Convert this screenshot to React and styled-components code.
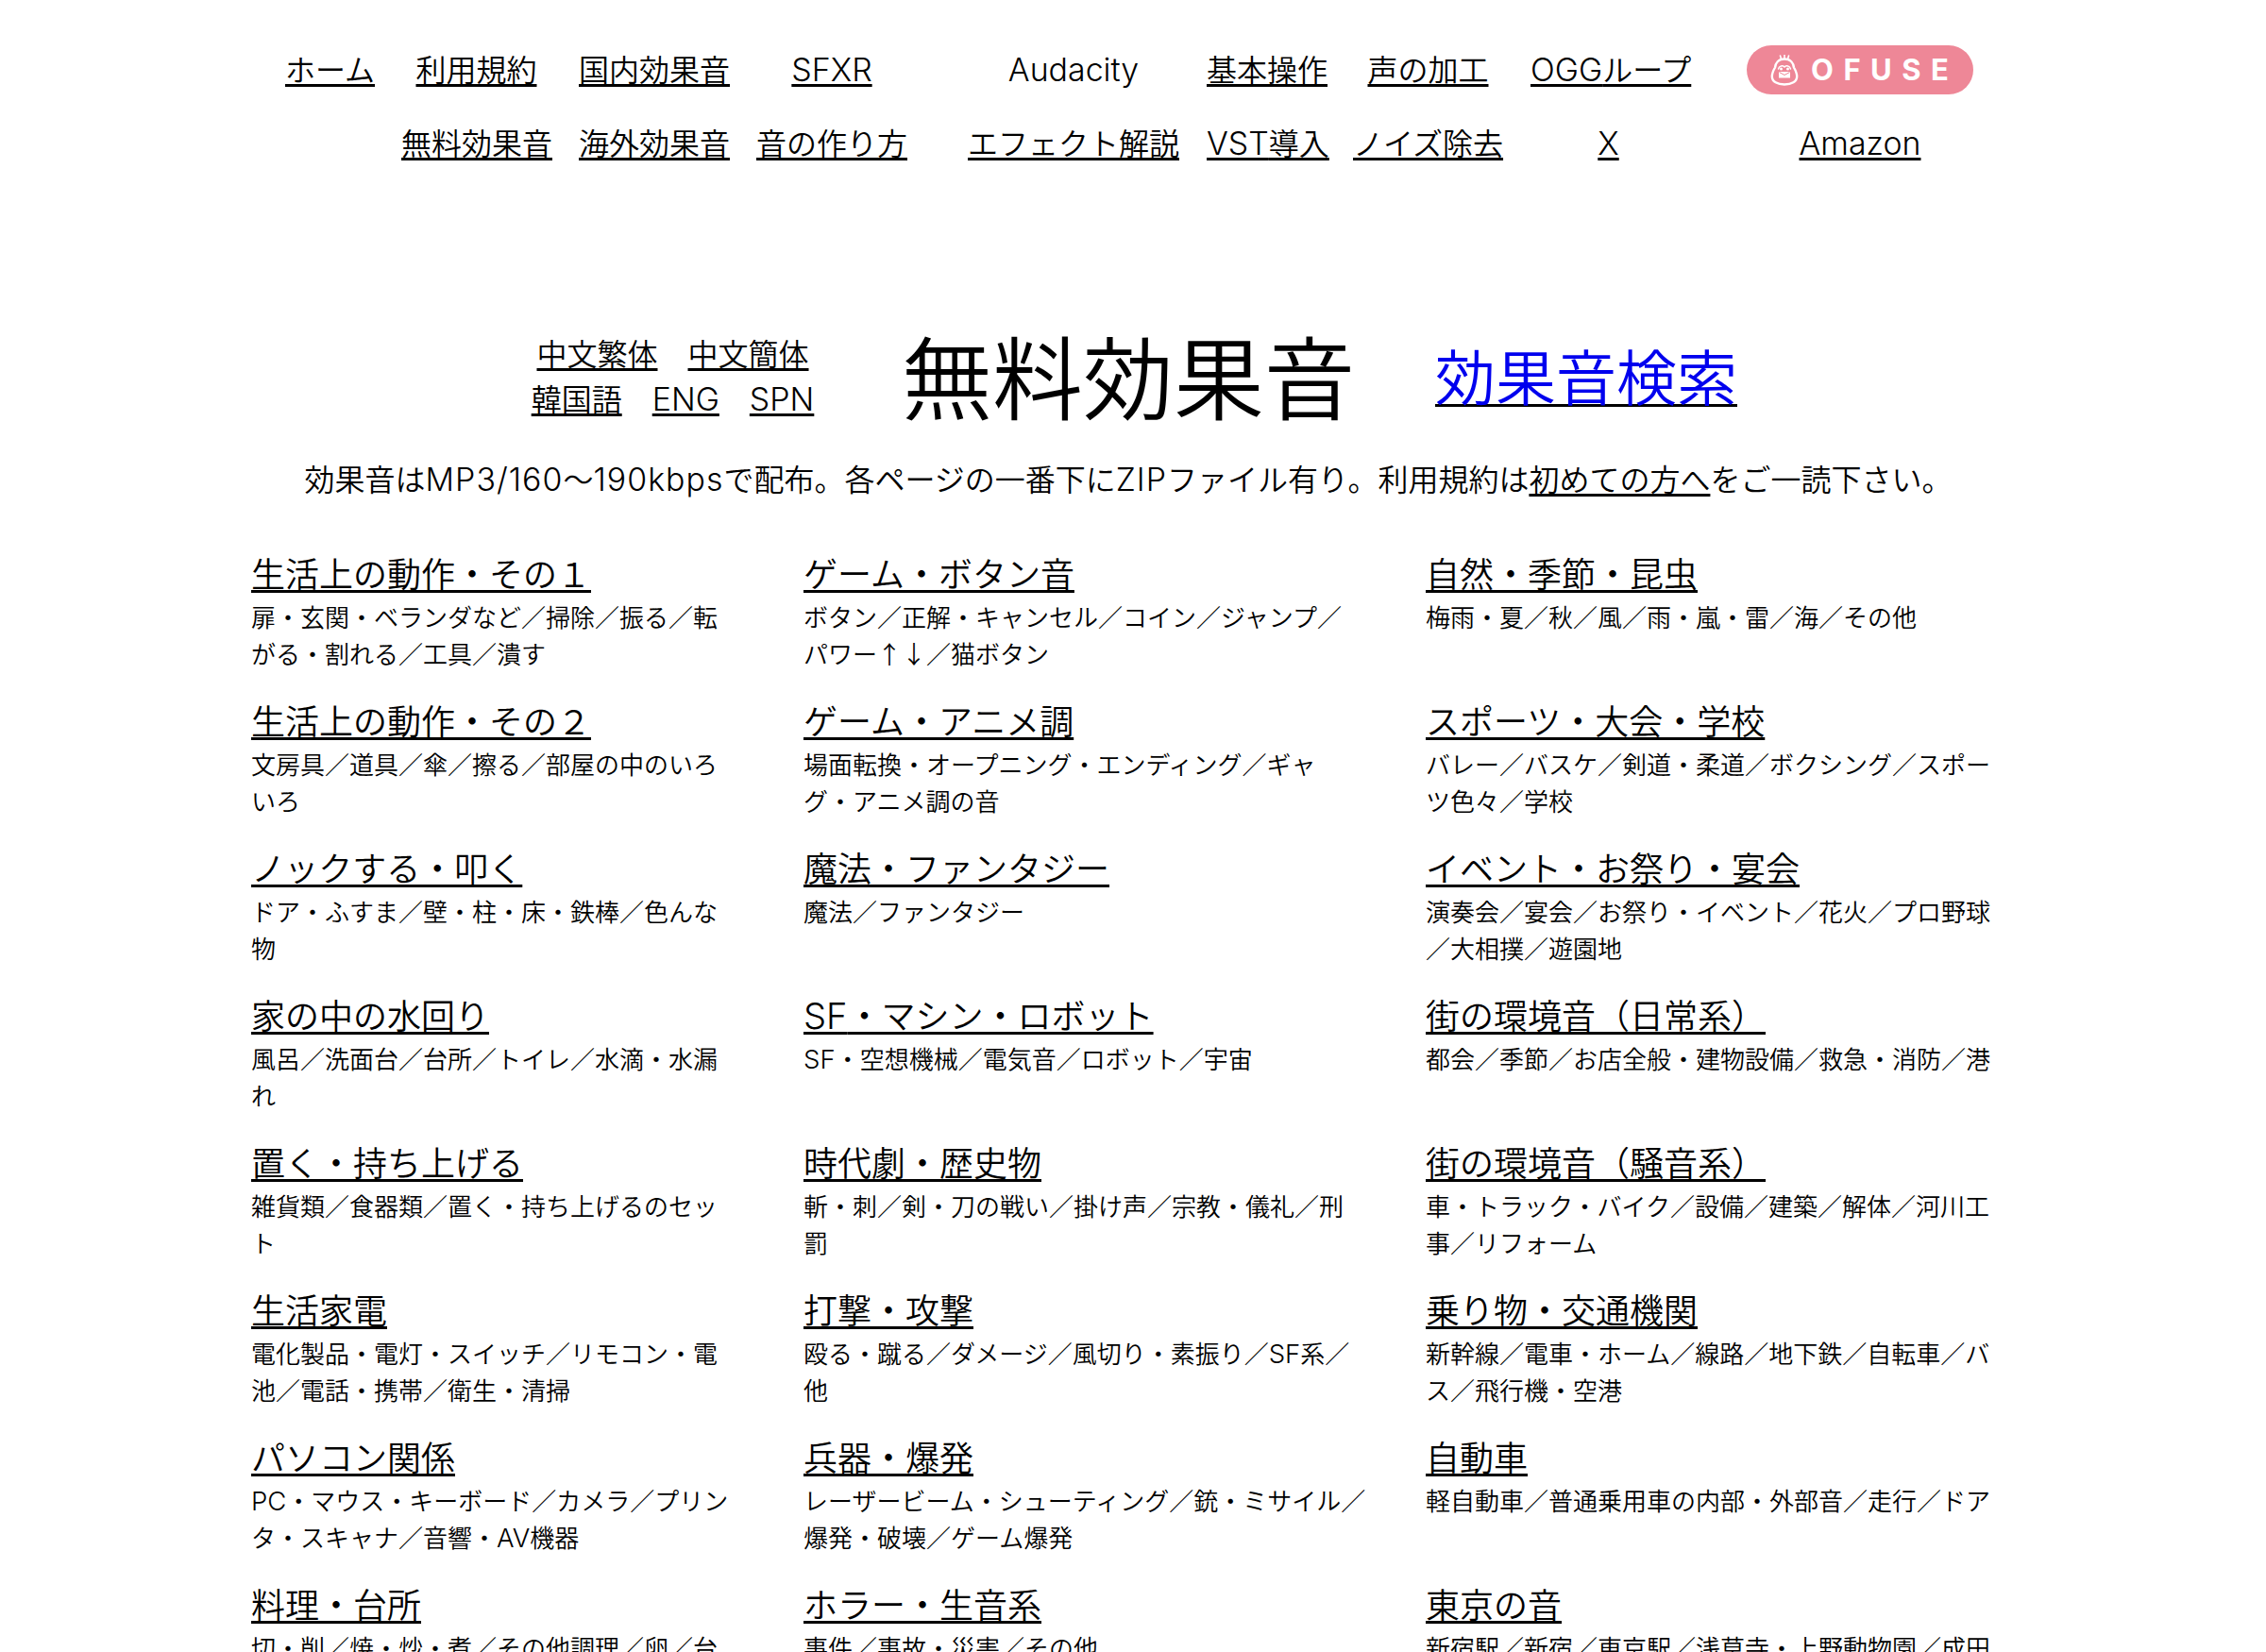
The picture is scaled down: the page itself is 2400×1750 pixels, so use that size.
import React from "react";
import styled, { createGlobalStyle } from "styled-components";

const Global = createGlobalStyle`
  html, body { margin: 0; padding: 0; background: #fff; overflow: hidden; }
  body {
    color: #000;
    font-family: "Noto Sans CJK JP", sans-serif;
    font-weight: 350;
  }
  a { color: inherit; }
`;

const Page = styled.div`
  width: 2400px;
  height: 1750px;
  overflow: hidden;
  display: flex;
  flex-direction: column;
`;

const LatinRun = styled.span`
  font-family: Inter, "Noto Sans CJK JP", sans-serif;
  font-size: 1.06em;
  font-weight: 300;
  line-height: 0;
`;

const T = ({ children }) =>
  children.split(/([A-Za-z0-9/.]+)/).map((part, i) =>
    i % 2 ? <LatinRun key={i}>{part}</LatinRun> : part
  );

const Nav = styled.nav`
  display: grid;
  grid-template-columns: 94px 159px 159px 160px 6px 224px 126px 159px 165px 6px 240px;
  grid-template-rows: 52px 52px;
  column-gap: 29px;
  row-gap: 26px;
  margin: 48px 0 0 302px;
  width: max-content;
  font-size: 32px;
  line-height: 48px;
  text-align: center;
  white-space: nowrap;
`;

const NavCell = styled.div`
  grid-column: ${(p) => p.$col};
  grid-row: ${(p) => p.$row};
`;

const NavLink = styled.a`
  color: #000;
  text-decoration: ${(p) => (p.$plain ? "none" : "underline")};
  text-decoration-thickness: 3px;
  text-underline-offset: 3px;
`;

const Ofuse = styled.a`
  display: flex;
  align-items: center;
  width: 240px;
  height: 52px;
  box-sizing: border-box;
  padding-left: 25px;
  gap: 13px;
  border-radius: 26px;
  background: #ee8797;
  color: #fff;
  font: 700 31px/52px Inter, sans-serif;
  letter-spacing: 10.5px;
  text-decoration: none;
`;

const Hero = styled.div`
  display: flex;
  align-items: flex-start;
  margin: 174px 0 0 564px;
`;

const LangTable = styled.div`
  display: flex;
  flex-direction: column;
  align-items: center;
  width: 297px;
  margin-top: -3px;
  font-size: 32px;
  line-height: 48px;
  white-space: nowrap;
`;

const LangRow = styled.div`
  display: flex;
  gap: 32px;
`;

const SmallLink = styled.a`
  color: #000;
  text-decoration: underline;
  text-decoration-thickness: 3px;
  text-underline-offset: 3px;
`;

const Title = styled.h1`
  margin: -28px 0 0 94px;
  font-size: 96px;
  line-height: 144px;
  font-weight: 350;
  white-space: nowrap;
`;

const SearchLink = styled.a`
  margin: -4px 0 0 85px;
  font-size: 64px;
  line-height: 96px;
  white-space: nowrap;
  color: #0000ee;
  text-decoration: underline;
  text-decoration-color: #000;
  text-decoration-thickness: 3px;
  text-underline-offset: 4px;
`;

const Intro = styled.p`
  margin: 14px 0 0 0;
  padding-right: 10px;
  text-align: center;
  font-size: 32px;
  line-height: 48px;
  white-space: nowrap;

  ${LatinRun} {
    letter-spacing: 1px;
  }
`;

const Grid = styled.div`
  display: grid;
  grid-template-columns: 585px 659px 1fr;
  grid-auto-rows: 156px;
  margin: 50px 0 0 266px;
`;

const Item = styled.div`
  display: flex;
  flex-direction: column;
`;

const Heading = styled.a`
  align-self: flex-start;
  color: #000;
  font-size: 36px;
  line-height: 53px;
  white-space: nowrap;
  text-decoration: underline;
  text-decoration-thickness: 3px;
  text-underline-offset: 3px;
`;

const Desc = styled.div`
  font-size: 26px;
  line-height: 39px;
  white-space: nowrap;
`;

const Line = styled.div``;

const Penguin = () => (
  <svg width="30" height="33" viewBox="0 0 30 33" fill="none" aria-hidden="true">
    <path d="M11.5 4.5 L10.5 1 M15 4 L15 0.5 M18.5 4.5 L19.5 1" stroke="#fff" strokeWidth="1.6" strokeLinecap="round" />
    <path
      d="M15 4.5 C8.5 4.5 5.5 9 5 13.5 C3 17 1.8 20 1.8 23 C1.8 28.5 7.5 31.5 15 31.5 C22.5 31.5 28.2 28.5 28.2 23 C28.2 20 27 17 25 13.5 C24.5 9 21.5 4.5 15 4.5 Z"
      stroke="#fff"
      strokeWidth="2.4"
    />
    <path d="M8.5 15 C9.5 11.5 13 11 15 13 C17 11 20.5 11.5 21.5 15" stroke="#fff" strokeWidth="1.5" strokeLinecap="round" />
    <circle cx="11.5" cy="15" r="1.5" fill="#fff" />
    <circle cx="18.5" cy="15" r="1.5" fill="#fff" />
    <rect x="9" y="18" width="12" height="6.5" fill="#fff" />
    <path d="M9.5 18.5 L15 21.5 L20.5 18.5" stroke="#ee8797" strokeWidth="1" />
  </svg>
);

const rows = [
  ["生活上の動作・その１", ["扉・玄関・ベランダなど／掃除／振る／転", "がる・割れる／工具／潰す"]],
  ["ゲーム・ボタン音", ["ボタン／正解・キャンセル／コイン／ジャンプ／", "パワー↑↓／猫ボタン"]],
  ["自然・季節・昆虫", ["梅雨・夏／秋／風／雨・嵐・雷／海／その他"]],
  ["生活上の動作・その２", ["文房具／道具／傘／擦る／部屋の中のいろ", "いろ"]],
  ["ゲーム・アニメ調", ["場面転換・オープニング・エンディング／ギャ", "グ・アニメ調の音"]],
  ["スポーツ・大会・学校", ["バレー／バスケ／剣道・柔道／ボクシング／スポー", "ツ色々／学校"]],
  ["ノックする・叩く", ["ドア・ふすま／壁・柱・床・鉄棒／色んな", "物"]],
  ["魔法・ファンタジー", ["魔法／ファンタジー"]],
  ["イベント・お祭り・宴会", ["演奏会／宴会／お祭り・イベント／花火／プロ野球", "／大相撲／遊園地"]],
  ["家の中の水回り", ["風呂／洗面台／台所／トイレ／水滴・水漏", "れ"]],
  ["SF・マシン・ロボット", ["SF・空想機械／電気音／ロボット／宇宙"]],
  ["街の環境音（日常系）", ["都会／季節／お店全般・建物設備／救急・消防／港"]],
  ["置く・持ち上げる", ["雑貨類／食器類／置く・持ち上げるのセッ", "ト"]],
  ["時代劇・歴史物", ["斬・刺／剣・刀の戦い／掛け声／宗教・儀礼／刑", "罰"]],
  ["街の環境音（騒音系）", ["車・トラック・バイク／設備／建築／解体／河川工", "事／リフォーム"]],
  ["生活家電", ["電化製品・電灯・スイッチ／リモコン・電", "池／電話・携帯／衛生・清掃"]],
  ["打撃・攻撃", ["殴る・蹴る／ダメージ／風切り・素振り／SF系／", "他"]],
  ["乗り物・交通機関", ["新幹線／電車・ホーム／線路／地下鉄／自転車／バ", "ス／飛行機・空港"]],
  ["パソコン関係", ["PC・マウス・キーボード／カメラ／プリン", "タ・スキャナ／音響・AV機器"]],
  ["兵器・爆発", ["レーザービーム・シューティング／銃・ミサイル／", "爆発・破壊／ゲーム爆発"]],
  ["自動車", ["軽自動車／普通乗用車の内部・外部音／走行／ドア"]],
  ["料理・台所", ["切・削／焼・炒・煮／その他調理／卵／台"]],
  ["ホラー・生音系", ["事件／事故・災害／その他"]],
  ["東京の音", ["新宿駅／新宿／東京駅／浅草寺・上野動物園／成田"]],
];

const nav = [
  [1, 1, "ホーム"], [2, 1, "利用規約"], [3, 1, "国内効果音"], [4, 1, "SFXR"], [6, 1, "Audacity", true],
  [7, 1, "基本操作"], [8, 1, "声の加工"], [9, 1, "OGGループ"],
  [2, 2, "無料効果音"], [3, 2, "海外効果音"], [4, 2, "音の作り方"], [6, 2, "エフェクト解説"],
  [7, 2, "VST導入"], [8, 2, "ノイズ除去"], [9, 2, "X"], [11, 2, "Amazon"],
];

export default function App() {
  return (
    <Page>
      <Global />
      <Nav>
        {nav.map(([col, row, label, plain]) => (
          <NavCell key={label} $col={col} $row={row}>
            <NavLink href="#" $plain={plain}><T>{label}</T></NavLink>
          </NavCell>
        ))}
        <NavCell $col={11} $row={1}>
          <Ofuse href="#"><Penguin />OFUSE</Ofuse>
        </NavCell>
      </Nav>
      <Hero>
        <LangTable>
          <LangRow>
            <SmallLink href="#">中文繁体</SmallLink>
            <SmallLink href="#">中文簡体</SmallLink>
          </LangRow>
          <LangRow>
            <SmallLink href="#">韓国語</SmallLink>
            <SmallLink href="#"><T>ENG</T></SmallLink>
            <SmallLink href="#"><T>SPN</T></SmallLink>
          </LangRow>
        </LangTable>
        <Title>無料効果音</Title>
        <SearchLink href="#">効果音検索</SearchLink>
      </Hero>
      <Intro>
        <T>効果音はMP3/160〜190kbpsで配布。各ページの一番下にZIPファイル有り。利用規約は</T>
        <SmallLink href="#">初めての方へ</SmallLink>をご一読下さい。
      </Intro>
      <Grid>
        {rows.map(([title, lines]) => (
          <Item key={title}>
            <Heading href="#"><T>{title}</T></Heading>
            <Desc>
              {lines.map((l) => (
                <Line key={l}><T>{l}</T></Line>
              ))}
            </Desc>
          </Item>
        ))}
      </Grid>
    </Page>
  );
}
